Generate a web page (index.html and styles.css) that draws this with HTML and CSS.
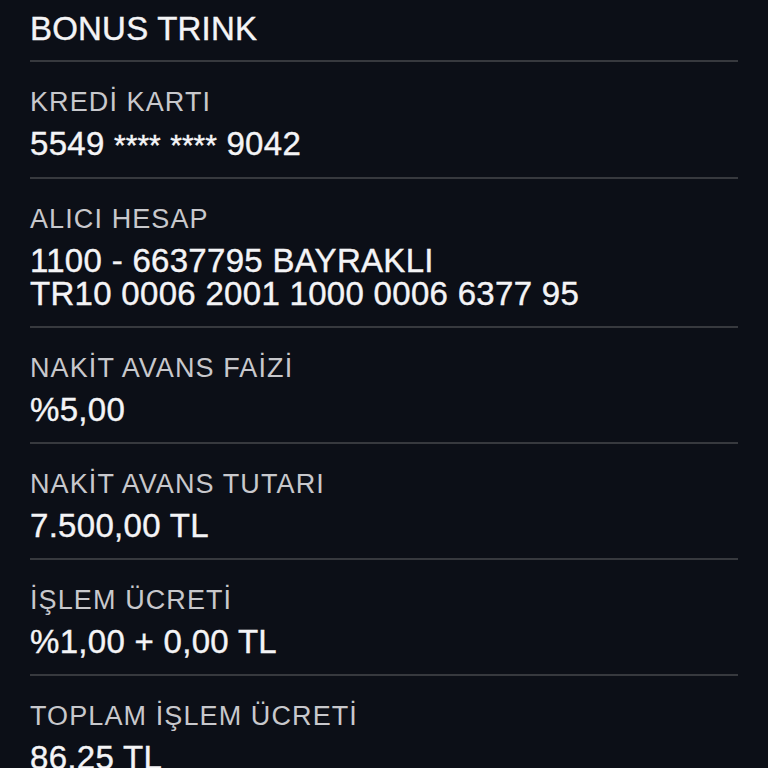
FILE: index.html
```html
<!doctype html>
<html lang="tr">
<head>
    <meta charset="UTF-8">
    <title>Nakit Avans Onay</title>
    <link rel="stylesheet" href="styles.css">
</head>
<body>
    <div class="container">
        <div class="title">BONUS TRINK</div>

        <div class="row">
            <div class="label">KREDİ KARTI</div>
            <div class="value">5549 <span class="mask">****</span> <span class="mask">****</span> 9042</div>
        </div>

        <div class="row">
            <div class="label">ALICI HESAP</div>
            <div class="value">1100 - 6637795 BAYRAKLI</div>
            <div class="value value-line">TR10 0006 2001 1000 0006 6377 95</div>
        </div>

        <div class="row">
            <div class="label">NAKİT AVANS FAİZİ</div>
            <div class="value">%5,00</div>
        </div>

        <div class="row">
            <div class="label">NAKİT AVANS TUTARI</div>
            <div class="value">7.500,00 TL</div>
        </div>

        <div class="row">
            <div class="label">İŞLEM ÜCRETİ</div>
            <div class="value">%1,00 + 0,00 TL</div>
        </div>

        <div class="row">
            <div class="label">TOPLAM İŞLEM ÜCRETİ</div>
            <div class="value">86,25 TL</div>
        </div>
    </div>
</body>
</html>
```

FILE: styles.css
```css
html,
body {
    margin: 0;
    height: 100%;
    overflow: hidden;
}

body {
    font-family: "Liberation Sans", Arial, Helvetica, sans-serif;
    background-color: #0c0f17;
    color: #f4f4f6;
}

.container {
    padding: 0 30px;
}

.title {
    padding-top: 12px;
    padding-bottom: 15px;
    font-size: 33px;
    line-height: 33px;
    letter-spacing: 0.2px;
    -webkit-text-stroke: 0.4px #f4f4f6;
    border-bottom: 2px solid #37393e;
}

.row {
    padding-top: 22px;
    padding-bottom: 16px;
    border-bottom: 2px solid #37393e;
}

.label {
    font-size: 27px;
    line-height: 36px;
    color: #c8c8cc;
    letter-spacing: 1.1px;
}

.value {
    margin-top: 7px;
    font-size: 33px;
    line-height: 33px;
    letter-spacing: 0.3px;
    -webkit-text-stroke: 0.4px #f4f4f6;
}

.value-line {
    margin-top: 0;
}

.mask {
    font-size: 30px;
    letter-spacing: 0;
}
```
